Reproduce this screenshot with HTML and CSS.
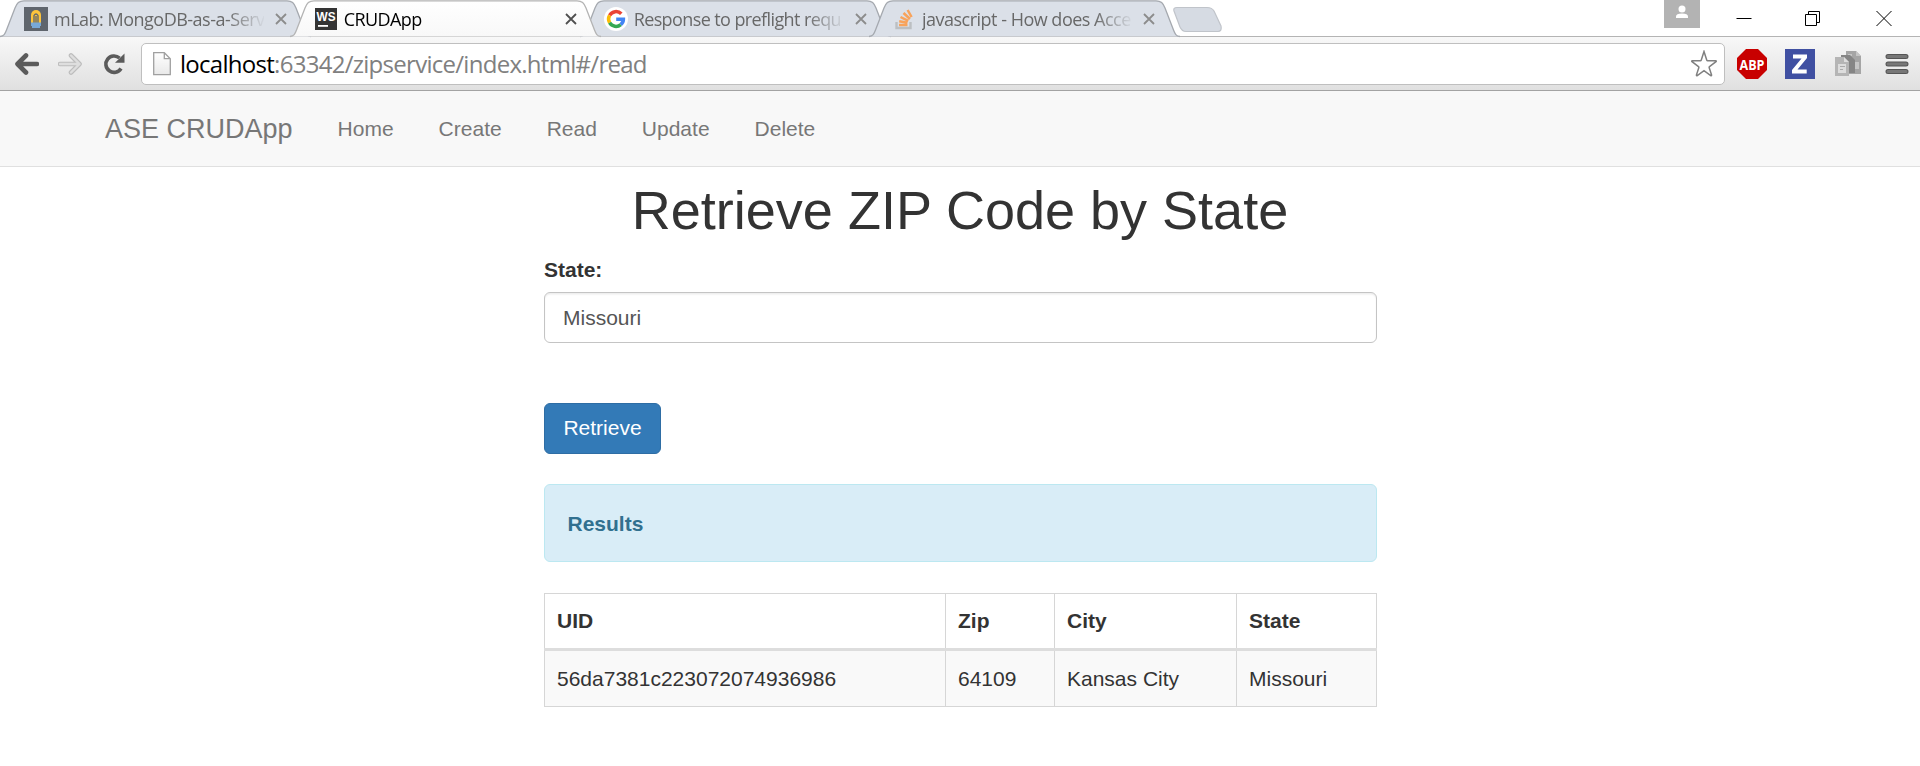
FILE: index.html
```
<!DOCTYPE html>
<html lang="en">
<head>
<meta charset="utf-8">
<title>CRUDApp</title>
<link rel="stylesheet" href="styles.css">
</head>
<body>
<svg width="0" height="0" class="defs">
  <defs>
    <path id="tab-edge" d="M0 36.500 C4 36 5 34 6.500 30 L15 8 C17 3 19 .8 24 .8 H287 C292 .8 294 3 296 8 L304.500 30 C306 34 307 36 311 36.500"/>
    <linearGradient id="page-fill" x1="0" y1="0" x2="0" y2="1"><stop offset="0" stop-color="#fff"/><stop offset="1" stop-color="#e9e9e9"/></linearGradient>
    <linearGradient id="active-fill" x1="0" y1="0" x2="0" y2="1"><stop offset="0" stop-color="#fff"/><stop offset="1" stop-color="#f8f8f8"/></linearGradient>
  </defs>
</svg>
<header class="browser">
  <div class="tabstrip">
    <div class="tab first">
      <svg class="shape" width="313" height="38"><use href="#tab-edge"/></svg>
      <svg class="favicon" width="24" height="24" viewBox="0 0 24 24"><path fill="#5f656d" d="M0 0h24v24H0z"/><path fill="#fdc43c" d="M7 16V8a5 5 0 0 1 10 0v8z"/><path fill="none" stroke="#5f656d" stroke-width="1.300" d="M10 16V8.500q2-3 4 0V16M12 9v7"/><path fill="#78a9d8" d="M7 15.500h10v3.500h-1v2H8v-2H7z"/></svg>
      <span class="title t1">mLab: MongoDB-as-a-Serv</span>
      <svg class="close" width="12" height="12"><path d="M1 1l10 10M11 1L1 11"/></svg>
    </div>
    <div class="tab active">
      <svg class="shape" width="313" height="38"><use href="#tab-edge"/></svg>
      <svg class="favicon" width="24" height="24" viewBox="0 0 24 24"><path fill="#343434" d="M1 1h22v22H1z"/><path fill="#fff" d="M4 18h10v1.800H4z"/><text x="2.500" y="13.500" class="ws" textLength="19" lengthAdjust="spacingAndGlyphs">WS</text></svg>
      <span class="title t2">CRUDApp</span>
      <svg class="close" width="12" height="12"><path d="M1 1l10 10M11 1L1 11"/></svg>
    </div>
    <div class="tab">
      <svg class="shape" width="313" height="38"><use href="#tab-edge"/></svg>
      <svg class="favicon" width="24" height="24" viewBox="0 0 24 24"><circle cx="12" cy="12" r="12" fill="#fff"/><g fill="none" stroke-width="3.500"><path stroke="#ea4335" d="M5.600 8.300A7.400 7.400 0 0 1 17.300 6.800"/><path stroke="#fbbc05" d="M5.600 15.700a7.400 7.400 0 0 1 0-7.400"/><path stroke="#34a853" d="M16.800 17.600A7.400 7.400 0 0 1 5.600 15.700"/><path stroke="#4285f4" d="M12.200 12.300h7.200q0 3.300-2.600 5.300"/></g></svg>
      <span class="title t3">Response to preflight requ</span>
      <svg class="close" width="12" height="12"><path d="M1 1l10 10M11 1L1 11"/></svg>
    </div>
    <div class="tab last">
      <svg class="shape" width="313" height="38"><use href="#tab-edge"/></svg>
      <svg class="favicon" width="24" height="24" viewBox="0 0 24 24"><path fill="none" stroke="#bcbfc2" stroke-width="2.400" d="M3.500 15v6h14V15"/><path fill="none" stroke="#f8a35b" stroke-width="2.500" d="M6 18h8.500M6.200 14.200l8.300 1.600M7.500 10l7.800 3.800M10.500 6l6.500 6M14.600 3l4 7"/></svg>
      <span class="title t4">javascript - How does Acce</span>
      <svg class="close" width="12" height="12"><path d="M1 1l10 10M11 1L1 11"/></svg>
    </div>
    <svg class="newtab" width="50" height="27"><path d="M1 5Q0 1.500 4 1.500H34Q39 1.500 41 5L48 20Q49 25.500 45 25.500H13Q9 25.500 7 21Z"/></svg>
    <div class="window-controls">
      <svg class="user" width="36" height="28"><path fill="#b3b3b3" d="M0 0h36v28H0z"/><circle cx="18" cy="9" r="3.500" fill="#fff"/><path fill="#fff" d="M12 18v-1.500q0-3 6-3t6 3V18z"/></svg>
      <svg class="min" width="16" height="28"><path d="M.5 18.500h15"/></svg>
      <svg class="restore" width="16" height="28"><path d="M.5 14.500h11v11H.5zM3.500 14.500v-3h11v11h-3"/></svg>
      <svg class="quit" width="16" height="28"><path d="M.5 11l15 15M15.500 11L.5 26"/></svg>
    </div>
  </div>
  <div class="toolbar">
    <svg class="back" width="24" height="22"><path d="M3 11h19M11 2.500L2.500 11l8.500 8.500"/></svg>
    <svg class="forward" width="24" height="22"><path class="edge" d="M2 11h19M13 2.500l8.500 8.500-8.500 8.500"/><path class="core" d="M2 11h19M13 2.500l8.500 8.500-8.500 8.500"/></svg>
    <svg class="reload" width="22" height="22"><path fill="none" stroke="#5b5b5b" stroke-width="3.600" d="M18 15.500A8.200 8.200 0 1 1 16.500 5"/><path fill="#5b5b5b" d="M21.500.5v9.300H12z"/></svg>
    <div class="omnibox">
      <svg class="page" width="18" height="24"><path d="M.7.700h10.600l6 6v16H.7zM11.300.7v6h6"/></svg>
      <span class="url"><b>localhost</b>:63342/zipservice/index.html#/read</span>
      <svg class="star" width="28" height="27"><path d="M14 1.500l2.800 8.700q.2.500.8.500h8.100q1 .3.300 1l-6.500 5q-.5.400-.3 1l2.400 7.300q0 1-.9.600L14 20.600l-6.700 5q-.9.400-.9-.6l2.400-7.300q.2-.6-.3-1L2 11.700q-.7-.7.300-1h8.100q.6 0 .8-.5z"/></svg>
    </div>
    <svg class="abp" width="30" height="30"><path fill="#c80000" d="M9 0h12l9 9v12l-9 9H9l-9-9V9z"/><text x="2.500" y="20.500" textLength="25" lengthAdjust="spacingAndGlyphs">ABP</text></svg>
    <svg class="zed" width="30" height="30"><path fill="#4050a2" d="M0 0h30v30H0z"/><path fill="#fff" d="M8 5.500h14v3.500L12.500 20.500h9.200v4H7v-3.500L16.500 9.500H8z"/></svg>
    <svg class="pages" width="27" height="28"><path fill="#a5a5a5" d="M11 1h10l5 5v18H11z"/><path fill="#c5c5c5" d="M13 4h4v2h-4zM20 12h4v7h-4zM21 1v5h5z"/><path fill="#858585" d="M6 5h9l5 5v13H6z"/><path fill="#b5b5b5" d="M0 7h9l5 5v14H0z"/><path fill="#ddd" d="M9 7v5h5zM3 14h8v9H3z"/><path stroke="#aaa" d="M5 16.500h5M5 19.500h3"/></svg>
    <svg class="menu" width="24" height="22"><path class="edge" d="M3 3.500h18M3 11h18M3 18.500h18"/><path class="core" d="M3 3.500h18M3 11h18M3 18.500h18"/></svg>
  </div>
</header>
<nav class="navbar">
  <a class="brand">ASE CRUDApp</a>
  <a>Home</a><a>Create</a><a>Read</a><a>Update</a><a>Delete</a>
</nav>
<main class="content">
  <h1>Retrieve ZIP Code by State</h1>
  <label for="state">State:</label>
  <input id="state" class="field" type="text" value="Missouri">
  <button class="button" type="button">Retrieve</button>
  <div class="alert"><strong>Results</strong></div>
  <table class="results">
    <colgroup><col class="c1"><col class="c2"><col class="c3"><col class="c4"></colgroup>
    <thead><tr><th>UID</th><th>Zip</th><th>City</th><th>State</th></tr></thead>
    <tbody><tr><td>56da7381c223072074936986</td><td>64109</td><td>Kansas City</td><td>Missouri</td></tr></tbody>
  </table>
</main>
</body>
</html>
```
FILE: styles.css
```
* { box-sizing: border-box; }
body { margin: 0; height: 766px; overflow: hidden; background: #fff; color: #333; font: 21px/30px "Liberation Sans", Arial, sans-serif; }
svg { display: block; flex: none; }
.defs { position: absolute; }

.browser { font-family: "Open Sans", "Noto Sans", sans-serif; }
.tabstrip { display: flex; height: 37px; border-bottom: 1.500px solid #b4b4b4; }
.tab { position: relative; flex: none; display: flex; align-items: flex-start; width: 313px; height: 38px; margin-right: -23.200px; padding-left: 24px; }
.tab.active { z-index: 2; }
.shape { position: absolute; left: 0; top: 0; fill: #dbe0e8; stroke: #a5a9af; stroke-width: 1.300; }
.active .shape { fill: url(#active-fill); stroke: #b4b4b4; }
.favicon { position: relative; margin-top: 7px; }
.ws { font: bold 13px "Liberation Sans", Arial, sans-serif; fill: #fff; }
.title { position: relative; width: 210px; margin-left: 6px; overflow: hidden; white-space: nowrap; font-size: 18px; line-height: 38px; color: #686868; -webkit-mask-image: linear-gradient(90deg, #000 82%, transparent 101%); mask-image: linear-gradient(90deg, #000 82%, transparent 101%); }
.active .title { color: #000; }
.t1 { letter-spacing: -.5px; }
.t2 { letter-spacing: -.6px; }
.t3 { letter-spacing: -.6px; }
.t4 { letter-spacing: -.5px; }
.last .title { margin-left: 4.500px; width: 210.500px; }
.close { position: relative; margin: 13px 0 0 11px; stroke: #8c8c8c; stroke-width: 1.800; }
.active .close { stroke: #505050; }
.newtab { margin: 6px 0 0 14px; fill: #d6dbe3; stroke: #c0c4ca; stroke-width: 1.200; }
.window-controls { display: flex; margin-left: auto; padding-right: 28px; fill: none; stroke: #000; }
.user { stroke: none; margin-right: 36px; }
.min { margin-right: 53px; }
.restore { margin-right: 55px; }

.toolbar { display: flex; align-items: center; height: 54px; padding: 0 10px 0 15px; background: linear-gradient(#f8f8f8, #e0e0e0); border-bottom: 1.500px solid #a3a3a3; }
.back { fill: none; stroke: #5b5b5b; stroke-width: 4.600; stroke-linecap: round; stroke-linejoin: round; }
.forward { margin-left: 19px; fill: none; stroke-linecap: round; stroke-linejoin: round; }
.forward .edge { stroke: #bdbdbd; stroke-width: 4.600; }
.forward .core { stroke: #dedede; stroke-width: 2.400; }
.reload { margin-left: 21px; }
.omnibox { display: flex; align-items: center; width: 1584px; height: 42px; margin-left: 16px; padding: 0 6px 0 11px; background: #fff; border: 1.500px solid #bfbfbf; border-radius: 5px; }
.page path { fill: url(#page-fill); stroke: #a0a0a0; stroke-width: 1.300; }
.url { margin-left: 9px; font-size: 24px; letter-spacing: -.72px; color: #808080; white-space: nowrap; }
.url b { font-weight: 400; color: #000; }
.star { margin-left: auto; fill: #fff; stroke: #808080; stroke-width: 1.500; }
.abp { margin-left: 12px; }
.abp text { font: bold 14px "Open Sans", sans-serif; fill: #fff; }
.zed { margin-left: 18px; }
.pages { margin-left: 20px; }
.menu { margin-left: 23px; fill: none; stroke-linecap: round; }
.menu .edge { stroke: #555; stroke-width: 5; }
.menu .core { stroke: #777; stroke-width: 3; }

.navbar { display: flex; align-items: center; height: 76px; padding-left: 82.500px; background: #f8f8f8; border-bottom: 1px solid #e0e0e0; color: #777; }
.navbar a { padding: 0 22.500px; }
.navbar .brand { font-size: 27px; }

.content { width: 833px; margin: 0 543px 0 544px; padding-top: 13.500px; }
h1 { margin: 0 1px 15px 0; font-weight: 400; font-size: 54px; line-height: 59.400px; text-align: center; }
label { display: block; font-weight: 700; margin-bottom: 7px; }
.field { display: block; width: 100%; height: 51px; padding: 10px 18px 8px; color: #555; font: inherit; border: 1.500px solid #c4c4c4; border-radius: 6px; box-shadow: inset 0 1.500px 1.500px rgba(0,0,0,.075); }
.button { display: block; width: 117px; height: 51px; margin: 60px 0 30px; padding: 0; background: #337ab7; border: 1.500px solid #2e6da4; border-radius: 6px; color: #fff; font: inherit; }
.alert { height: 78px; padding: 24px 22.500px; margin-bottom: 31px; background: #d9edf7; border: 1.500px solid #bce8f1; border-radius: 6px; color: #31708f; }
.results { width: 833px; table-layout: fixed; border-collapse: collapse; }
.c1 { width: 401px; }
.c2 { width: 109px; }
.c3 { width: 182px; }
th, td { height: 56.500px; padding: 0 12px; text-align: left; border: 1px solid #d6d6d6; }
th { border-bottom: 3px solid #ddd; }
tbody tr { background: #f9f9f9; }
```
